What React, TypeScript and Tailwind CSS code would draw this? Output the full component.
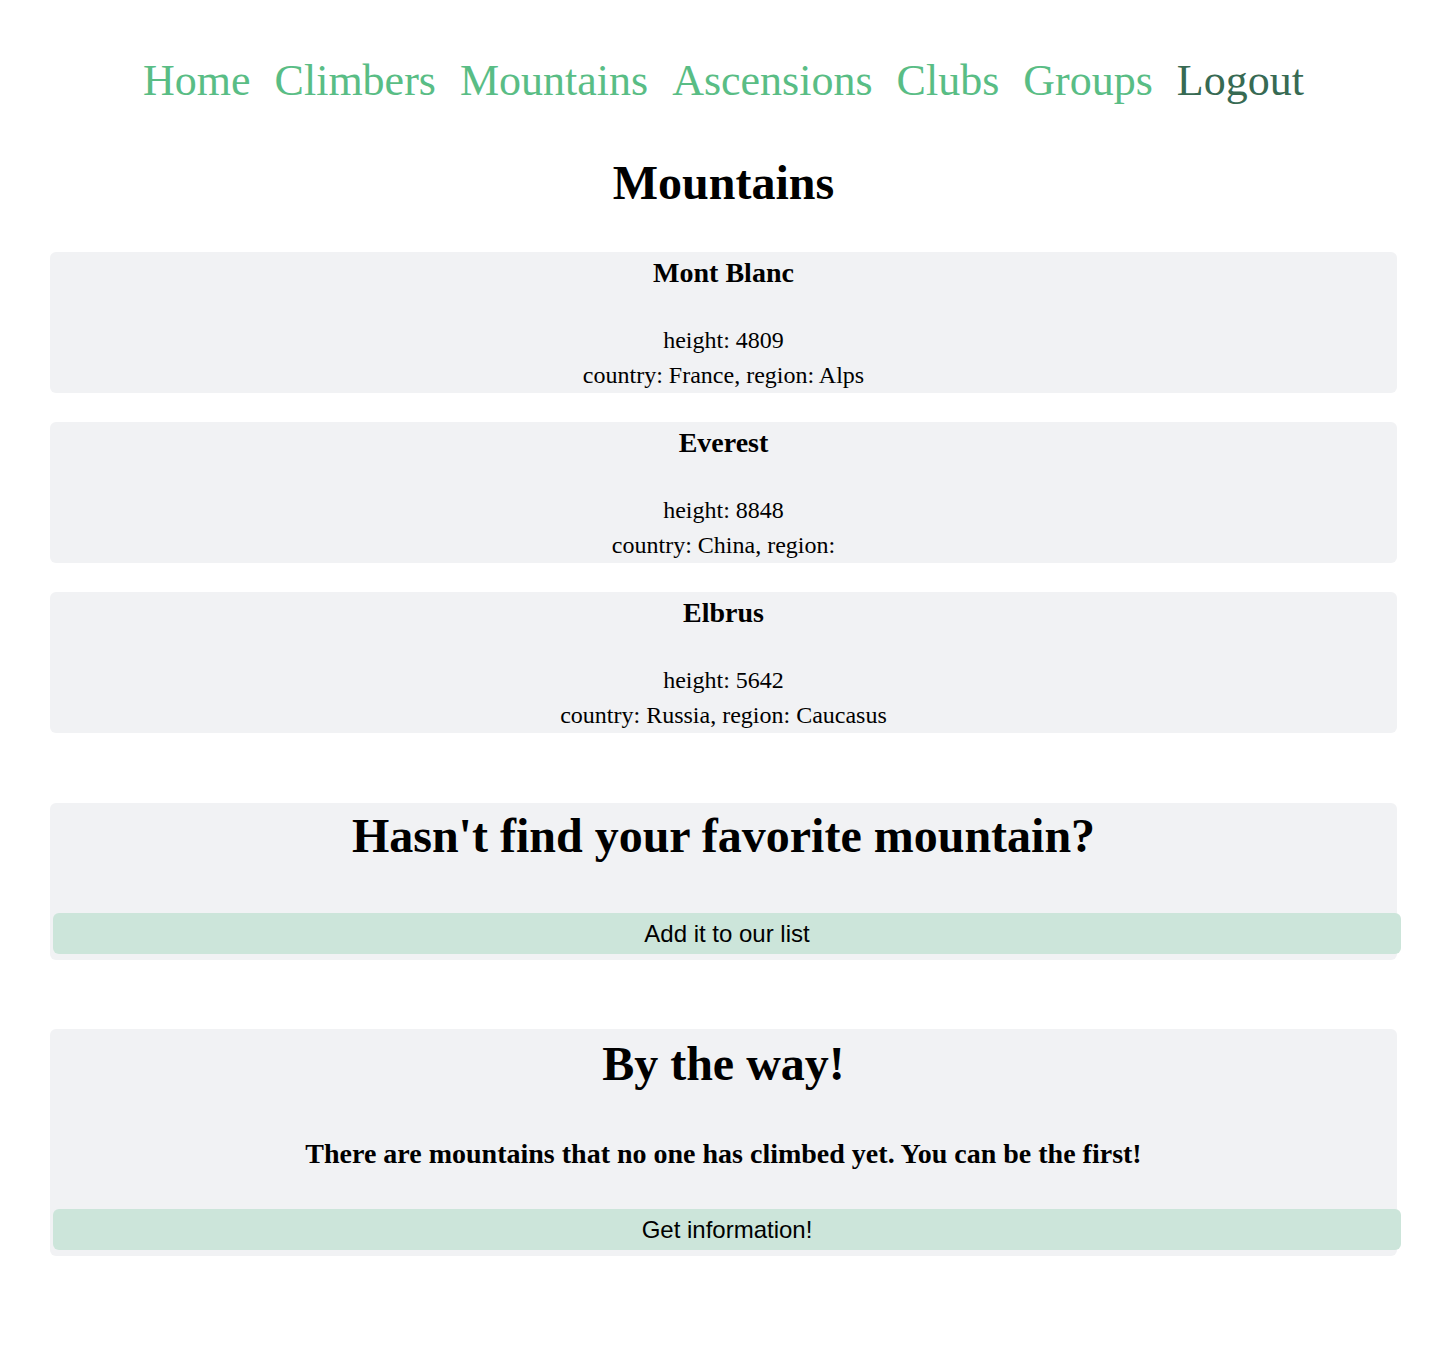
import React from "react";

const serif = { fontFamily: '"Liberation Serif", "Times New Roman", serif' };

const mountains = [
  { name: "Mont Blanc", height: 4809, country: "France", region: "Alps" },
  { name: "Everest", height: 8848, country: "China", region: "" },
  { name: "Elbrus", height: 5642, country: "Russia", region: "Caucasus" },
];

const navItems = ["Home", "Climbers", "Mountains", "Ascensions", "Clubs", "Groups"];

export default function App() {
  return (
    <div className="min-h-[1352px] bg-white text-black" style={serif}>
      <div className="pl-[50px] pr-[35px] pt-[56px] pb-[96px]">
        <nav className="flex justify-center gap-[24px] text-[44px] leading-[50px]">
          {navItems.map((n) => (
            <a key={n} href="#" className="text-[#59bd85]">
              {n}
            </a>
          ))}
          <a href="#" className="text-[#376a53]">
            Logout
          </a>
        </nav>

        <h1 className="mt-[49px] text-center text-[48px] font-bold leading-[55px]">
          Mountains
        </h1>

        <div className="mt-[42px] flex flex-col gap-[29px]">
          {mountains.map((m) => (
            <div key={m.name} className="rounded-[6px] bg-[#f1f2f4] pt-[5px] text-center">
              <h3 className="text-[28px] font-bold leading-[32px]">{m.name}</h3>
              <p className="mt-[34px] text-[24px] leading-[35px]">height: {m.height}</p>
              <p className="text-[24px] leading-[35px]">
                country: {m.country}, region: {m.region}
              </p>
            </div>
          ))}
        </div>

        <div className="mt-[70px] rounded-[6px] bg-[#f1f2f4] pt-[5px] pb-[6px] text-center">
          <h2 className="text-[48px] font-bold leading-[55px]">Hasn't find your favorite mountain?</h2>
          <button
            className="ml-[3px] mt-[50px] block h-[41px] w-[calc(100%+1px)] rounded-[6px] bg-[#cce5da] text-[24px] text-black"
            style={{ fontFamily: '"Liberation Sans", Arial, sans-serif' }}
          >
            Add it to our list
          </button>
        </div>

        <div className="mt-[69px] rounded-[6px] bg-[#f1f2f4] pt-[7px] pb-[6px] text-center">
          <h2 className="text-[48px] font-bold leading-[55px]">By the way!</h2>
          <p className="mt-[47px] mb-[39px] text-[28px] font-bold leading-[32px]">
            There are mountains that no one has climbed yet. You can be the first!
          </p>
          <button
            className="ml-[3px] block h-[41px] w-[calc(100%+1px)] rounded-[6px] bg-[#cce5da] text-[24px] text-black"
            style={{ fontFamily: '"Liberation Sans", Arial, sans-serif' }}
          >
            Get information!
          </button>
        </div>
      </div>
    </div>
  );
}
